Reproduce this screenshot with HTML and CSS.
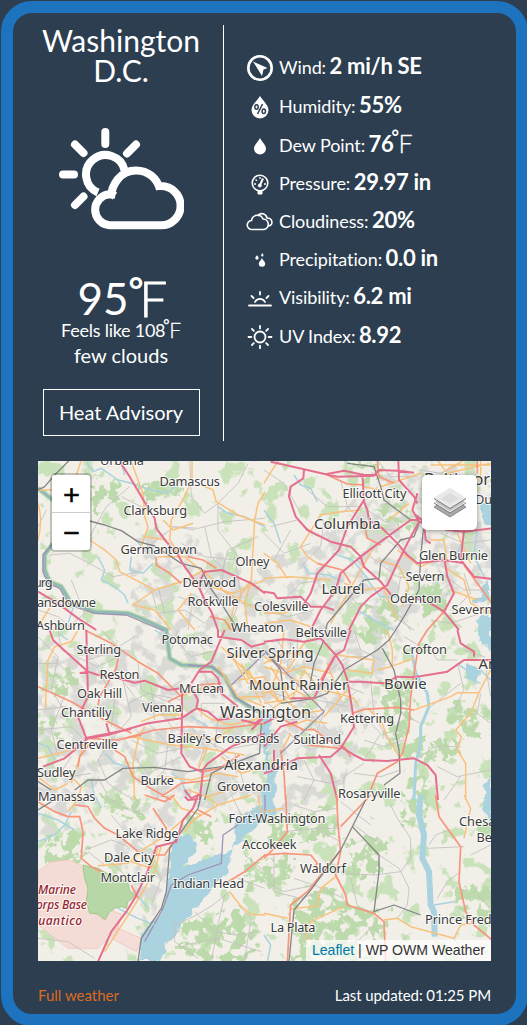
FILE: index.html
```html
<!DOCTYPE html>
<html lang="en">
<head>
<meta charset="utf-8">
<title>Washington D.C. weather</title>
<link rel="stylesheet" href="styles.css">
</head>
<body>
<main class="widget">
  <section class="top">
    <div class="now">
      <h1 class="city">Washington D.C.</h1>
      <svg class="sky" viewBox="0 0 126 104" fill="none" stroke="#fff" stroke-width="8" stroke-linecap="round">
        <path d="M47.300 5v12M78 17.500l-9 9M17 17.500l8.500 8.500M5 47.500h11M17 78l8.500-8.500"/>
        <path stroke-linecap="butt" d="M66.500 43A19.500 19.500 0 1 0 40 65.500M57 69A12 12 0 0 0 51.500 67.200A15.600 15.600 0 0 0 51.500 98.300H103A19.600 19.600 0 0 0 103 59.100H99M53 71.500C53 57 63 43.500 78 43.500C90 43.500 99 51 102 62.500"/>
      </svg>
      <div class="temp">95<span class="deg">°</span><span class="f">F</span></div>
      <div class="feels">Feels like 108<span class="deg">°</span><span class="f">F</span></div>
      <div class="cond">few clouds</div>
      <button class="alert">Heat Advisory</button>
    </div>
    <ul class="infos">
      <li><svg viewBox="0 0 28 28"><circle cx="14" cy="14" r="11.700" fill="none" stroke="#fff" stroke-width="2.600"/><path d="M7 7.500l14.500 6.500-4 1.500-1.500 6.500z" fill="#fff"/></svg><span>Wind: <b>2 mi/h SE</b></span></li>
      <li><svg viewBox="0 0 28 28"><path d="M14 3C11 8 5.500 12 5.500 17a8.500 8.500 0 0 0 17 0C22.500 12 17 8 14 3z" fill="#fff"/><g fill="none" stroke="#2c3e50" stroke-width="1.500"><path d="M16.500 11l-5 10"/><ellipse cx="10.500" cy="14" rx="1.700" ry="2.300"/><ellipse cx="17.800" cy="18.300" rx="1.700" ry="2.300"/></g></svg><span>Humidity: <b>55%</b></span></li>
      <li><svg viewBox="0 0 28 28"><path d="M14 6C12 10 8 13 8 16.500a6 6 0 0 0 12 0C20 13 16 10 14 6z" fill="#fff"/></svg><span>Dew Point: <b>76</b><span class="deg">°</span><span class="f">F</span></span></li>
      <li><svg viewBox="0 0 28 28" fill="none" stroke="#fff"><circle cx="14" cy="13" r="7.800" stroke-width="1.600"/><path d="M12 21h4v3h-4z" fill="#fff"/><path d="M8 14h2M9.500 9.500l1.500 1.200M14 7v2M18 14h2" stroke-width="1.300"/><path d="M17 8.500l-3 6.500" stroke-width="2"/><circle cx="13.800" cy="15.500" r="1.500" fill="#fff"/></svg><span>Pressure: <b>29.97 in</b></span></li>
      <li><svg viewBox="0 0 28 28" fill="none" stroke="#fff" stroke-width="1.600"><path d="M6 21.500a4.500 4.500 0 0 1-.5-9 6 6 0 0 1 11.500-1.500 5.300 5.300 0 0 1 1 10.500zM11.500 8a5.200 5.200 0 0 1 9.500 2c6 0 6.500 7.500 1.500 8"/></svg><span>Cloudiness: <b>20%</b></span></li>
      <li><svg viewBox="0 0 28 28" fill="#fff"><path d="M16 12c-1 2.500-3.200 3.500-3.200 5.500a3.200 3.200 0 0 0 6.400 0c0-2-2.200-3-3.200-5.500zM11 9c-.6 1.300-1.700 2-1.700 3.100a1.700 1.700 0 0 0 3.400 0C12.700 11 11.600 10.300 11 9zM16.300 7c-.5 1-1.200 1.500-1.200 2.300a1.200 1.200 0 0 0 2.400 0c0-.8-.7-1.300-1.200-2.300z"/></svg><span>Precipitation: <b>0.0 in</b></span></li>
      <li><svg viewBox="0 0 28 28" fill="none" stroke="#fff" stroke-width="1.800" stroke-linecap="round"><path d="M3 21.500h22M9 18a5.500 5.500 0 0 1 10 0M14 8v2.500M5.500 12l2 2M22.500 12l-2 2"/></svg><span>Visibility: <b>6.2 mi</b></span></li>
      <li><svg viewBox="0 0 28 28" fill="none" stroke="#fff" stroke-width="1.800" stroke-linecap="round"><circle cx="14" cy="14" r="5.500"/><path d="M14 2.800v2.600M14 22.600v2.600M2.500 14h2.800M22.700 14h2.800M6 6l1.800 1.800M20.200 20.200L22 22M22 6l-1.800 1.800M7.800 20.200L6 22"/></svg><span>UV Index: <b>8.92</b></span></li>
    </ul>
  </section>

  <section class="map">
    <svg class="tiles" viewBox="38 461 453 500">
      <defs>
        <filter id="woods" x="0" y="0" width="1" height="1" color-interpolation-filters="sRGB">
          <feTurbulence type="fractalNoise" baseFrequency=".05" numOctaves="4" seed="8"/>
          <feColorMatrix values="0 0 0 0 .79  0 0 0 0 .885  0 0 0 0 .73  0 14 0 0 -8.300"/>
        </filter>
        <filter id="town" x="-.1" y="-.1" width="1.200" height="1.200" color-interpolation-filters="sRGB">
          <feTurbulence type="fractalNoise" baseFrequency=".07" numOctaves="3" seed="21" result="n"/>
          <feColorMatrix in="n" values="0 0 0 0 .85  0 0 0 0 .85  0 0 0 0 .84  8 0 0 0 -3.900"/>
          <feComposite operator="in" in2="SourceGraphic"/>
        </filter>
        <filter id="grove" x="-.1" y="-.1" width="1.200" height="1.200" color-interpolation-filters="sRGB">
          <feTurbulence type="fractalNoise" baseFrequency=".09" numOctaves="3" seed="5" result="n"/>
          <feDisplacementMap in="SourceGraphic" in2="n" scale="22" xChannelSelector="R" yChannelSelector="G" result="d"/>
          <feColorMatrix in="n" values="0 0 0 0 0  0 0 0 0 0  0 0 0 0 0  0 0 14 0 -6.200" result="m"/>
          <feComposite in="d" in2="m" operator="in"/>
        </filter>
        <filter id="rough" x="-.1" y="-.1" width="1.200" height="1.200">
          <feTurbulence type="fractalNoise" baseFrequency=".1" numOctaves="3" result="n"/>
          <feDisplacementMap in="SourceGraphic" in2="n" scale="9" xChannelSelector="R" yChannelSelector="G"/>
        </filter>
        <pattern id="hatch" width="9" height="9" patternUnits="userSpaceOnUse" patternTransform="rotate(45)"><path class="hatch" d="M0 0v9"/></pattern>
      </defs>
      <rect x="38" y="461" width="453" height="500" fill="#f2efe9"/>
      <rect x="38" y="461" width="453" height="500" filter="url(#woods)"/>
      <g filter="url(#town)"><path d="M130 540l50-10 60 30 70-10 60-70 60-20 61 10v110l-70 30-30 60-50 120-70 30-110-20-100-20-60-80 30-60 100 10zM38 760l50 10 10 50-60 20zM110 830l60-40 10 50-30 90-20-20z"/></g>
      <g class="wood" filter="url(#grove)">
        <path d="M92 483l25-6 5 15-10 12-20 7zM140 488l25-8 20 9-20 10-14 6zM342 461h40l4 18-20 12-10-22zM372 500l30 5 18 20-10 10-25-12zM360 607l30-8 12 14-14 24-20-8zM350 630l20-3 12 14-20 4zM48 674l26-8 3 24-26 4zM42 712l16 8 6 20-20-4zM100 792l36 8 8 20-30-4zM44 838l36-7 8 28-40 4zM352 848l30-2v28l-26 2zM290 900l50-16-6 54-30 20zM180 920l60-14 8 40-60 10zM382 680l30 5-5 60-20-2zM400 780l24-8 3 60-24-10zM186 816l30 2-5 22-22-4zM455 890l36-6v40l-34-6zM240 866l56-12-4 26-44 10zM465 820l26-4v24zM265 818l68-8 6 26-70 14zM410 588l30-10 12 30-20 20zM345 840l40-6 4 40-40 10zM290 950l60-20 20 31h-80zM400 735l60 5-6 20-50 0zM450 700l40 10-8 30-34-10zM180 925l50-20 30 20-10 36h-70zM330 900l60 10-6 26-50-4z"/>
      </g>
      <g class="water" filter="url(#rough)">
        <path d="M262 715l9-1-3 46 9 12-3 40-24 22-17 15-6 22-29 34-32 40-5 16h-22l2-25 22-28 6-36 4-32 14-9 10 18-14 15 12-1 38-14 2-28 26-17 5-30-2-30z"/>
        <path d="M480 503h11v23l-8-2zM476 620l15-5v36l-12-12zM484 784l7-8v50l-9-20zM468 662l12 8-4 14-8-6zM489 580v20l-16 3z"/>
      </g>

      <g transform="translate(38 460) scale(.33333)">
        <path class="bank" d="M0 85L45 120M45 250L20 285V330L35 365 70 380 100 430 170 455 270 460 310 475 390 512"/><path class="river" d="M0 85L45 120M45 250L20 285V330L35 365 70 380 100 430 170 455 270 460 310 475 390 512"/><path class="border" d="M40 255L15 285V335L30 370 65 385 95 435 170 460 265 465 390 518"/>
        <path class="creek" d="M145 5l20 30 25-10 50 35 40 10 60 20 50 10 40-40M180 290l20 40-10 30 40 20 30 25 10 25M280 290l-5 40 40 10 30-30M540 140l30 20 50 10 60 30M260 45l-10-40M300 245l20 30 10-20M110 430l-20 60"/>
        <path class="lane" d="M35 285l60-5 50 25 80 45 80-15M155 230l50-90 70-60M0 200l25-50M455 0l5 110 40 50 40-30 60-60 30-60M540 130v80l60 80 60 20M400 200l80 5 80-20 120-10M330 260l80-60 60 10M430 250l70 40 90 10M500 200l20 90 60 60M560 300l-10 90 60 40 70 10M340 390l20 70 80-10 60 40M380 460l-20-80M420 410l60 20 30-40M590 290l20 120-40 100M100 360l40 100-60 50M0 450l60 20 50 40M250 110l80 40M660 230l-90 40-30 110M450 510l10-60"/>
        <path class="second" d="M280 5L300 60 315 100 320 170 330 200 310 260M462 0V60L440 110 400 180 395 240 425 285M490 75L525 90 535 125 600 165 681 195M681 95L660 130 650 180 640 360 620 430 630 510M155 240L200 270 235 300 245 335 350 390 430 365 500 330M285 435L350 390M285 435L350 450 400 510M0 90H70L110 60 130 0M0 130q15 50 0 110M385 240l-60-10M375 180l30 30 60-20M515 380l70 20 95-40M570 510l20-80 50-70M460 400l-40 50 50 60M0 500l50-80 60 10M360 290l80 0 60 50M500 335l60 60 90 50"/>
        <path class="primary" d="M355 290V315L395 340 430 370M450 290L495 300 535 325M515 470L560 480 580 510"/>
        <path class="rail" d="M155 183L200 195 250 212 300 245 350 258 430 310 490 325 515 380 550 430 600 510M0 90L20 80 50 45 95 0"/>
        <path class="motor" d="M245 5L275 50 325 135 350 175 355 205 385 245 420 285 440 320 480 375 500 420 520 455 540 510M485 385L490 355 500 335 550 330 600 352 640 370 681 400M0 395L60 430 120 475 175 510"/>
      </g>
      <g transform="translate(264 460) scale(.33333)">
        <path class="creek" d="M90 45l20 30 30 10 20 40M0 150l30 40 20 60M115 310l20 30 60 5 40 20M310 360l40 50 50 0M280 450l50 30 60 30M640 210l-10 80 30 60M205 280l60 20 50 60M600 230l-20 50"/>
        <path class="lane" d="M0 30l60 40 50 90M130 90l60 50 100 0 50-60M20 200l80-20 60 50M0 220l60 60 80-30M50 430l60-60 60-10M230 60l20 80 60 60 80 10M310 150l60 40M180 180l-10 80-60 60M320 290l80 60 80 10M370 240l80 60M250 270l60 60M410 350l-20 120 60 40M520 330l80 60 80 0M500 480l60 10 120-40M340 0l40 50 80 0M0 450l70 20 80-20M80 210l-50 90M470 30l60 10 60-30M600 340l20 60-60 60M220 370l60 60 50 10M380 430l60 80M530 220l70 30 80-10"/>
        <path class="second" d="M0 70Q30 20 45 0M170 165L230 155 290 150M170 165L110 260 130 290 160 310M0 280L40 310 70 355M0 355L80 350 200 360M350 80L470 40M350 90l-50-10M375 180l60-50M330 260L200 490M345 300l60 20 30 60-20 60M240 370l60 20 70-10M360 390l40 90M400 270l70 50 70-30M500 240h40l10 70M540 320l60 40 20 70 60 30M500 15h180M520 0l30 40 130-30M650 0v60l-80-10M600 0l-50 30M0 460l60 0 60-30M0 490l80-10 60 20M580 220l40 90M560 390l80 30"/>
        <path class="primary" d="M190 45L250 72 300 75M340 0L345 50 390 70M600 315L640 370 684 430M160 310L235 330 260 370M300 190L310 235 350 255M490 510L540 455M640 0V40M80 80l-5 30"/>
        <path class="rail" d="M465 190L450 230 410 240 350 310 345 355 300 360 250 420 190 490 185 510M480 190L470 290 465 390 420 470 395 510M350 80L360 120 440 180M250 10l80 10 20 60"/>
        <path class="motor" d="M20 5L120 28 185 43 240 32 300 45 340 45M185 43L220 50 330 47 345 30 400 32 450 38M403 0L405 60 450 110 460 130M295 40L300 120 250 200 225 270 160 340 140 400 115 440M120 28L118 55 80 80 75 110 95 170 130 210 200 245 260 260 290 290 300 320 350 365 385 410M465 180L440 180 350 245 290 290 230 340 215 390 170 450 140 510M465 185L430 250 400 310 370 375 320 410 290 440 255 510M300 125L310 150 315 180 355 205 400 250 430 285 460 310 540 300 600 310M455 165L480 185 485 240 500 250M540 290L550 350 570 400 540 455M440 410L500 430 540 455 585 510M600 210L590 300 630 350 684 357M0 395L30 400 40 415 110 410 140 440 180 440 210 450M550 210L600 215 684 205M460 100L445 150 465 185 550 210"/>
      </g>
      <g transform="translate(38 630) scale(.33333)">
        <path class="bank" d="M385 0L395 85 430 105 520 110 560 140 590 200 640 235 681 250"/><path class="river" d="M385 0L395 85 430 105 520 110 560 140 590 200 640 235 681 250"/><path class="border" d="M450 105l75 5 40 35 30 60 45 25M580 165L681 70"/>
        <path class="creek" d="M60 10l30 20M0 340l30 10 20 40M200 370l30 30 40 10M160 450l10 50M400 430l30 20 20 60M350 0l30 20M460 260l50 30"/>
        <path class="lane" d="M0 20l60 60-20 100 50 80M60 0l10 60 110 50 60-30M150 90l60-20 80-50M190 0l60 60-20 60 60 80M250 130l30 130-60 70M180 120l50 90-10 80M0 240l80-10 90 30 70-10M90 170l-50 130 20 80M0 300l100-10 40 40M270 220l60-30 100 20M300 100l10 80 90 40M330 280l60 60-10 80-60 60M280 330l80 40 90-20M290 380l40 50 100-50M180 440l30 60M220 330l-40 60 30 70 60 40M360 230l40 60 70 30M460 290l40 60-20 60M540 270l-10 80 60 50M400 20l60 60 80-20M460 10l40 50M560 220l-70 0 0 40M30 400l60 40 70-10M100 380l-40 60M480 320l80 40 100-20M590 370l30 100-60 40M340 170l10 100M150 260l70-10M0 100h60l80 80M360 440l0 70M420 0l-20 60M500 140l30 60"/>
        <path class="second" d="M120 0L100 35 50 50 30 90 22 235M0 385L80 365 150 340M320 290L300 330 285 400 290 510M280 320L400 345 500 355 620 375M380 440L460 450 540 430 600 440M430 200l70-30 60 10M310 275l50-20 70 0M475 235l40 30 60 20 90-20M550 50L681 180M590 80L681 60M540 110L600 200 681 230M570 60l60 100 50 0M610 100l60 120M600 150l80-10M630 120l50 80M440 310l90 20 60-40M550 380l60 50 70-20M510 350l-30 70M100 440l30 30-10 40M0 440l50 40 40-20M120 400l-20 60M140 330l-20 70M450 480l60 20 90-30M610 200l70 0"/>
        <path class="primary" d="M140 0L220 40 300 95 360 130 410 180 430 200M0 170L100 215 200 270 280 310M240 330L350 300 450 290 560 295 681 280M240 85L235 115 185 200 180 225M230 360L260 380 285 440 330 470 400 510M150 325L240 330 310 315M160 335L125 380 120 410M390 215l60-30M480 165l70-5M495 425l50-10 60-40M370 500l60-40 90-10"/>
        <path class="rail" d="M110 480L150 450 200 450 255 415 350 412 450 425 550 410M0 455L40 480M670 280L665 370 560 410 520 430 500 510"/>
        <path class="motor" d="M35 0L45 30 100 80 150 125 180 135 240 145 290 158 320 152 390 180 430 175M145 0L148 125 150 200 120 260 145 325M15 410L80 385 110 360 150 325 210 315 260 300 330 280 430 265 475 235M125 130L150 125M140 325L280 297M432 180V265L430 370 455 410 490 425 510 400 580 350 681 310M460 160L485 120 520 95 560 0M480 125H520L540 145 550 190 600 230M455 165L480 210 475 235 510 245 540 270 580 265M495 425L485 510M440 480L460 505 490 490M205 280L215 315M540 0L540 20 610 30 640 50 681 40M610 270l40 10 30-20M640 300l40-40"/>
      </g>
      <g transform="translate(264 630) scale(.33333)">
        <path class="stream" d="M440 50L455 130 490 190 495 230 470 290V340L455 400 450 510"/><path class="creek" d="M580 100l40 30 30-10 30 30M600 140l50 20"/>
        <path class="lane" d="M270 0l20 60 60 30M320 150l10 100 40 80M280 180l-60 60 60 60M290 250l60 60-50 80M500 60l20 30 60 0M600 60l60 20 20 120M580 100l20 80-30 60M650 190l-10 60 40 30M470 380l40-30 80 0M520 410l60 30 100-20M300 400l-60 40 0 70M270 430l80 10 60-20M120 390l30 60-30 60M60 300l80 60M100 440l100 20 30-10M300 330l60 20 60-20M590 440l-50 70M80 40l-10 70 90 30M100 0l0 70M40 30l60 100M160 210l90 20M30 190l100 30 60 80M200 120l50-40 60 0M420 20l50 30M410 250l60 30M190 220l-30 80M0 210l70 60 90-10M250 170l50 20M500 230l90-70"/>
        <path class="second" d="M450 240L560 200 580 188H645L684 110M645 188L620 250 575 300 592 320 580 360 605 400V510M310 235L350 270 370 320 405 380M285 230L270 205 220 190 170 180 120 120M220 75L330 90 325 130 250 120M340 120L380 110 450 85M370 0L385 60V110M0 110l60 20 60-20 80 20M0 160l60 0 100 60M0 190l80-20M0 220l60-10 60 40 60-10M20 110l60 100M60 0l-10 100-30 80M0 80l70 40 40-60M120 120l-40 100M180 260l70-80M0 140l50 80M10 180l40 40M20 240l80-60M60 130l90 50M190 100l40 110M70 290l60-20 60 10M80 310l-30 60M0 100l60-30 80 0M130 30l-50 60"/>
        <path class="primary" d="M490 0L465 40 455 100 440 200 435 290 415 370 400 395 340 430 320 480M265 250L300 238 400 232 450 240M110 300L150 298 190 330 240 350 260 380M60 430L65 510M130 345L230 355M50 360L60 430M60 270l60 30M170 150l40-70"/>
        <path class="rail" d="M395 0L375 30 340 60 240 120 190 190 150 205 50 220M355 55L390 120 410 210 410 250 395 310 405 360 408 430 360 465M180 30L150 100 135 180M0 60L50 120 60 210"/>
        <path class="border" d="M0 60L180 245 50 370"/>
        <path class="motor" d="M0 35L60 28 120 35 170 25 215 75 235 105 250 150 265 240 270 290 230 355 200 380 100 385 30 420 0 430M260 0L240 60 215 75 185 130 150 205M250 155H290L360 160 400 140 450 142 550 125 600 90 684 90M580 0L590 40 630 65 630 80M230 350L270 375 300 390 370 393 450 385 490 405 515 435 522 510M165 375L200 430 220 510M80 205H150M0 350L50 290 100 275M30 360V420M0 280l40-20"/>
      </g>
      <g transform="translate(38 795) scale(.33333)">
        <path class="military" d="M0 230L40 200 90 195 130 210 150 270 155 350 205 375 210 340 250 360 240 400 180 460 90 460 0 390ZM240 400L310 430 295 470 220 430Z"/><path class="hatching" d="M0 230L40 200 90 195 130 210 150 270 155 350 205 375 210 340 250 360 240 400 180 460 90 460 0 390Z"/>
        <path class="forest" d="M135 210L155 215 180 220 215 240 240 245 270 265 275 290 290 300 270 320 265 340 250 335 230 340 215 350 200 375 180 355 155 355 145 320 150 280 140 250Z"/>
        <path class="border" d="M600 90L555 120 550 205 450 240 400 270 375 340 320 440M681 0V80"/>
        <path class="creek" d="M0 140l50-20 30-30 20-40M0 55l60 20 50 30M170 0l20 40M240 340l60 30 50 20M290 290l40 50"/>
        <path class="lane" d="M140 165l80-30 50 20M150 170l50 40M220 60l50 60 70-20M200 0l60 40 60 20M260 100l60 50M0 430l90 10 80 50M415 390l60-30 50-30 50-40M410 380l0 60 70 50M470 350l60 60 60 10 80-10M560 300l-20 90-20 110M600 330l40 40-20 120M580 0l30 60 70-20M620 180l60 50M430 400l-60 60M600 250l80 30M330 190l40 60-30 80M210 190l60 60M270 0l40 50M440 450l100-20 130 40"/>
        <path class="second" d="M180 212L270 205 320 160 370 130 440 70M640 0L540 30 465 75 440 110M500 0l40 30M575 290L610 335 640 358 681 360M370 150L350 230 290 330 200 470M280 200l60 20 20-60M130 0l-40 50M400 0l30 40 60 20M660 0l10 60"/>
        <path class="primary" d="M0 20L50 50 90 65 125 65 135 110 130 190 160 215 190 230M110 30L150 35 170 70 200 100 240 120 300 170M320 0L380 20 410 0M345 40L385 100 380 140M570 260L620 230 681 180M280 270L300 310M350 180l30 0 20-30M480 45l40 20"/>
        <path class="rail" d="M490 0L480 40 430 110 395 160 385 290 370 340 310 430 300 498M0 45L40 20"/>
        <path class="motor" d="M480 0L465 40 435 75 415 140 355 155 340 200 320 250 290 310 265 350 220 410 180 500M440 5L450 15 480 12"/>
      </g>
      <g transform="translate(264 795) scale(.33333)">
        <path class="stream wide" d="M470 0L465 60 480 120 475 190 495 230 500 330 510 350 512 425"/><path class="creek" d="M510 330l60-10M0 420l20 30-10 50M680 0v50"/>
        <path class="lane" d="M380 30l20 40 40 60v60l-30 40-80 10-90-5M345 180l60 40 30 60-5 50-30 40M270 90l80 60M600 155l-110 5M495 150l20-30 40-15M590 230l-40 30-30 50M90 250l60 20 90 40M30 180v110l80 20 60-20M0 260l60 30 90-20M150 100l80 40M60 110l100-10 70 0M90 30l60 20 70-10M340 380l-60 60-70 10M430 420l-60 70M570 430l40 60M620 180l60-30M640 300l40 40M100 400l60 50M260 250l20 80M230 20l90 70"/>
        <path class="second" d="M80 342L160 332 170 280 215 245M0 355L70 370M130 440V390L160 370 240 335M360 375L400 370 440 395 570 430 590 390 630 385M600 0L620 40 600 130M0 50l60-10"/>
        <path class="primary" d="M218 0L222 90 230 170 215 240 245 300 250 330 330 355 360 380 365 500M320 0L230 95M230 165L130 290 80 330 70 500M0 180L60 175 140 180 160 205 150 220M65 0L70 110 30 160 0 190M515 0L525 65 590 155 585 260 605 350 630 390 684 435"/>
        <path class="rail" d="M305 15L265 95 230 165 140 285 90 345 75 500M265 95L345 180V230L330 350 390 330 470 360"/>
      </g>

      <g class="labels">
        <text x="100" y="465" textLength="44">Urbana</text>
        <text x="159.500" y="485.500" textLength="60.500">Damascus</text>
        <text x="123.500" y="515" textLength="63.500">Clarksburg</text>
        <text x="120.500" y="553.500" textLength="76.500">Germantown</text>
        <text x="235.500" y="565.500" textLength="34">Olney</text>
        <text x="182.500" y="586.500" textLength="53.500">Derwood</text>
        <text x="187.500" y="605.500" textLength="51">Rockville</text>
        <text x="34" y="587" textLength="18.500">urg</text>
        <text x="37" y="606.500" textLength="59">ansdowne</text>
        <text x="36" y="629.500" textLength="49">Ashburn</text>
        <text x="342.500" y="498" textLength="64">Ellicott City</text>
        <text x="424" y="485" class="big" textLength="75">Baltimore</text>
        <text x="475" y="504">Dundalk</text>
        <text x="314" y="529" class="mid" textLength="66.500">Columbia</text>
        <text x="419" y="560" textLength="69">Glen Burnie</text>
        <text x="405.500" y="580.500" textLength="39">Severn</text>
        <text x="321.500" y="594" class="mid" textLength="43">Laurel</text>
        <text x="390" y="602.500" textLength="51.500">Odenton</text>
        <text x="254" y="610.500" textLength="54.500">Colesville</text>
        <text x="451.500" y="613.500">Severna</text>
        <text x="231" y="631.500" textLength="53">Wheaton</text>
        <text x="295.500" y="637" textLength="51.500">Beltsville</text>
        <text x="161.500" y="644" textLength="51.500">Potomac</text>
        <text x="226.500" y="658" class="mid" textLength="87">Silver Spring</text>
        <text x="402.500" y="654" textLength="44.500">Crofton</text>
        <text x="76.500" y="654" textLength="44.500">Sterling</text>
        <text x="99.500" y="679" textLength="40">Reston</text>
        <text x="179" y="693" textLength="45">McLean</text>
        <text x="249" y="690" class="mid" textLength="99">Mount Rainier</text>
        <text x="384" y="689" class="mid" textLength="42.500">Bowie</text>
        <text x="478.500" y="669" class="mid">Annapolis</text>
        <text x="77" y="698" textLength="45">Oak Hill</text>
        <text x="61" y="717" textLength="50.500">Chantilly</text>
        <text x="142" y="712" textLength="40">Vienna</text>
        <text x="220" y="718" class="big" textLength="91">Washington</text>
        <text x="340" y="722.500" textLength="54">Kettering</text>
        <text x="56.500" y="748.500" textLength="61.500">Centreville</text>
        <text x="167.500" y="742.500" textLength="112">Bailey's Crossroads</text>
        <text x="293.500" y="743.500" textLength="47.500">Suitland</text>
        <text x="224" y="769.500" class="mid" textLength="74">Alexandria</text>
        <text x="37" y="776.500" textLength="38.500">Sudley</text>
        <text x="140.500" y="785" textLength="33.500">Burke</text>
        <text x="217" y="791" textLength="53.500">Groveton</text>
        <text x="38" y="801" textLength="57.500">Manassas</text>
        <text x="338" y="797.500" textLength="62.500">Rosaryville</text>
        <text x="228.500" y="823" textLength="97">Fort-Washington</text>
        <text x="459" y="826">Chesapeake</text>
        <text x="476.500" y="842">Beach</text>
        <text x="115.500" y="837.500" textLength="63">Lake Ridge</text>
        <text x="242" y="849" textLength="54.500">Accokeek</text>
        <text x="104" y="862" textLength="50.500">Dale City</text>
        <text x="300" y="873" textLength="46">Waldorf</text>
        <text x="100.500" y="882" textLength="54.500">Montclair</text>
        <text x="173" y="888" textLength="71">Indian Head</text>
        <text x="425" y="923.500" textLength="95">Prince Frederick</text>
        <text x="270.500" y="931.500" textLength="45">La Plata</text>
        <g class="base"><text x="38" y="894" textLength="38">Marine</text><text x="29" y="909" textLength="58">Corps Base</text><text x="29" y="924.500" textLength="53">Quantico</text></g>
      </g>
    </svg>
    <div class="zoom"><a class="plus">+</a><a class="minus">−</a></div>
    <div class="layers"><svg viewBox="0 0 36 34"><path fill="#a9a9a9" stroke="#8b8b8b" d="M2 21L18 12l16 9-16 10z"/><path fill="#c6c6c6" stroke="#f2f2f2" d="M2 16L18 7l16 9-16 10z"/><path fill="none" stroke="#818181" d="M2 17l16 10 16-10"/><path fill="#e9e9e9" stroke="#eee" d="M2 12L18 2l16 10-16 10z"/><path fill="none" stroke="#777" d="M2 12.500l16 10 16-10"/><path fill="#dcdcdc" d="M18 7l9 5.500-9 5.500-9-5.500z"/></svg></div>
    <div class="credit"><a>Leaflet</a> | WP OWM Weather</div>
  </section>

  <footer class="foot"><a>Full weather</a><span>Last updated: 01:25 PM</span></footer>
</main>
</body>
</html>
```
FILE: styles.css
```css
* { box-sizing: border-box; }
html { background: #2c3e50; }
body { margin: 0; padding: 1px 0 0 1px; height: 1025px; overflow: hidden; font-family: Lato, "Open Sans", sans-serif; font-variant-ligatures: none; color: #fff; }
.widget { width: 527px; height: 1025px; border: 12px solid #1e73be; border-radius: 31px; padding: 12px 25px 0; background: #2c3e50; }
.top { display: flex; height: 416px; }
.now { width: 186px; padding: 0 19px 0 0; border-right: 1px solid #fff; text-align: center; display: flex; flex-direction: column; align-items: center; }
.city { margin: 0; width: 160px; font-size: 30px; line-height: 30px; font-weight: 400; }
.sky { width: 126px; height: 104px; margin-top: 42px; flex: none; }
.temp { font-size: 44px; line-height: 50px; margin-top: 42px; white-space: nowrap; height: 47px; }
.deg { display: inline-block; line-height: 0; }
.f { display: inline-block; line-height: 0; font-weight: 300; }
.temp .deg { font-size: 36px; font-weight: 700; transform: translateY(-12px); width: 14px; text-align: left; }
.temp .f { font-size: 49px; -webkit-text-stroke: .8px #fff; width: 22px; text-indent: -3px; transform: translateY(2px); }
.feels { font-size: 18px; line-height: 20px; letter-spacing: -.25px; white-space: nowrap; }
.feels .deg { width: 4px; font-weight: 700; font-size: 15px; text-indent: -2px; transform: translateY(-7px); }
.feels .f { font-size: 21px; -webkit-text-stroke: .3px #fff; transform: translateY(1px); }
.cond { font-size: 20px; line-height: 24px; margin-top: 3px; }
.alert { width: 157px; height: 47px; margin-top: 22px; padding: 0 0 1px; flex: none; border: 1px solid #fff; background: none; color: #fff; font: 20px Lato, sans-serif; }
.infos { list-style: none; margin: 0; padding: 22px 0 0 22px; }
.infos li { display: flex; align-items: center; height: 38.300px; font-size: 18px; letter-spacing: -.1px; white-space: nowrap; }
.infos svg { width: 28px; height: 28px; margin-right: 5px; margin-top: 5px; flex: none; }
.infos b { font-size: 22px; font-weight: 700; letter-spacing: -.3px; margin-left: -1px; }
.infos .deg { font-size: 18px; font-weight: 700; width: 5px; text-indent: -2px; transform: translateY(-8px); }
.infos .f { font-size: 25px; -webkit-text-stroke: .3px #fff; transform: translateY(1px); }
.infos li:first-child { padding-bottom: 1px; }
.infos li:nth-child(3) { padding-top: 2px; }

.map { position: relative; width: 453px; height: 500px; margin-top: 20px; overflow: hidden; }
.tiles { display: block; width: 453px; height: 500px; }
.tiles path { stroke-linejoin: round; }
.tiles [class]:is(.bank, .river, .border, .creek, .lane, .second, .primary, .rail, .motor, .stream) { fill: none; vector-effect: non-scaling-stroke; }
.wood path { fill: #bcdaab; }
.water path { fill: #aad3df; }
.forest { fill: #b7d8a6; stroke: #9fc98c; stroke-width: 3; }
.military { fill: #f5ded8; stroke: #f2bdb7; stroke-width: 2; }
.hatching { fill: url(#hatch); }
.hatch { stroke: #f1c9c4; stroke-width: 2; }
.tiles .bank { stroke: #b5d5a8; stroke-width: 5px; }
.tiles .river { stroke: #8fb8b8; stroke-width: 2.500px; }
.tiles .stream { stroke: #aad3df; stroke-width: 3px; }
.tiles .stream.wide { stroke-width: 6px; }
.tiles .border { stroke: #a092b4; stroke-width: 1.300px; }
.tiles .creek { stroke: #aad3df; stroke-width: 1.500px; }
.tiles .lane { stroke: #c4c3c1; stroke-width: .9px; }
.tiles .second { stroke: #f9c27c; stroke-width: 1.500px; }
.tiles .primary { stroke: #f7967b; stroke-width: 1.700px; }
.tiles .rail { stroke: #858585; stroke-width: 1.300px; }
.tiles .motor { stroke: #e56f8d; stroke-width: 2px; }
.labels text { font-family: "Noto Sans", sans-serif; font-size: 12.800px; fill: #3c3c3c; stroke: rgba(255,255,255,.75); stroke-width: 2px; paint-order: stroke; }
.labels .mid { font-size: 14.800px; }
.labels .big { font-size: 16.300px; }
.labels .base text { fill: #93252f; font-style: italic; font-weight: 500; font-size: 12px; }

.zoom { position: absolute; left: 12px; top: 12px; width: 42px; border: 2px solid rgba(0,0,0,.2); border-radius: 5px; background-clip: padding-box; }
.zoom a { display: block; height: 37.500px; background: #fff; color: #000; text-align: center; text-indent: 1px; font: 22px/39px "DejaVu Sans", sans-serif; -webkit-text-stroke: .7px #000; }
.zoom .plus { border-bottom: 1px solid #ccc; border-radius: 3px 3px 0 0; }
.zoom .minus { border-radius: 0 0 3px 3px; }
.layers { position: absolute; left: 384px; top: 14px; width: 55px; height: 55px; background: #fff; border-radius: 5px; box-shadow: 0 1px 5px rgba(0,0,0,.4); display: flex; align-items: center; justify-content: center; }
.layers svg { width: 36px; height: 34px; }
.credit { position: absolute; right: 0; bottom: 0; height: 21px; padding: 0 6px; background: rgba(255,255,255,.7); color: #333; font: 14.100px/20px "Liberation Sans", Arial, sans-serif; white-space: nowrap; }
.credit a { color: #0078a8; }
.foot { display: flex; justify-content: space-between; font-size: 15px; line-height: 20px; letter-spacing: -.08px; margin-top: 24px; }
.foot a { color: #dd6b1f; letter-spacing: 0; }
```
